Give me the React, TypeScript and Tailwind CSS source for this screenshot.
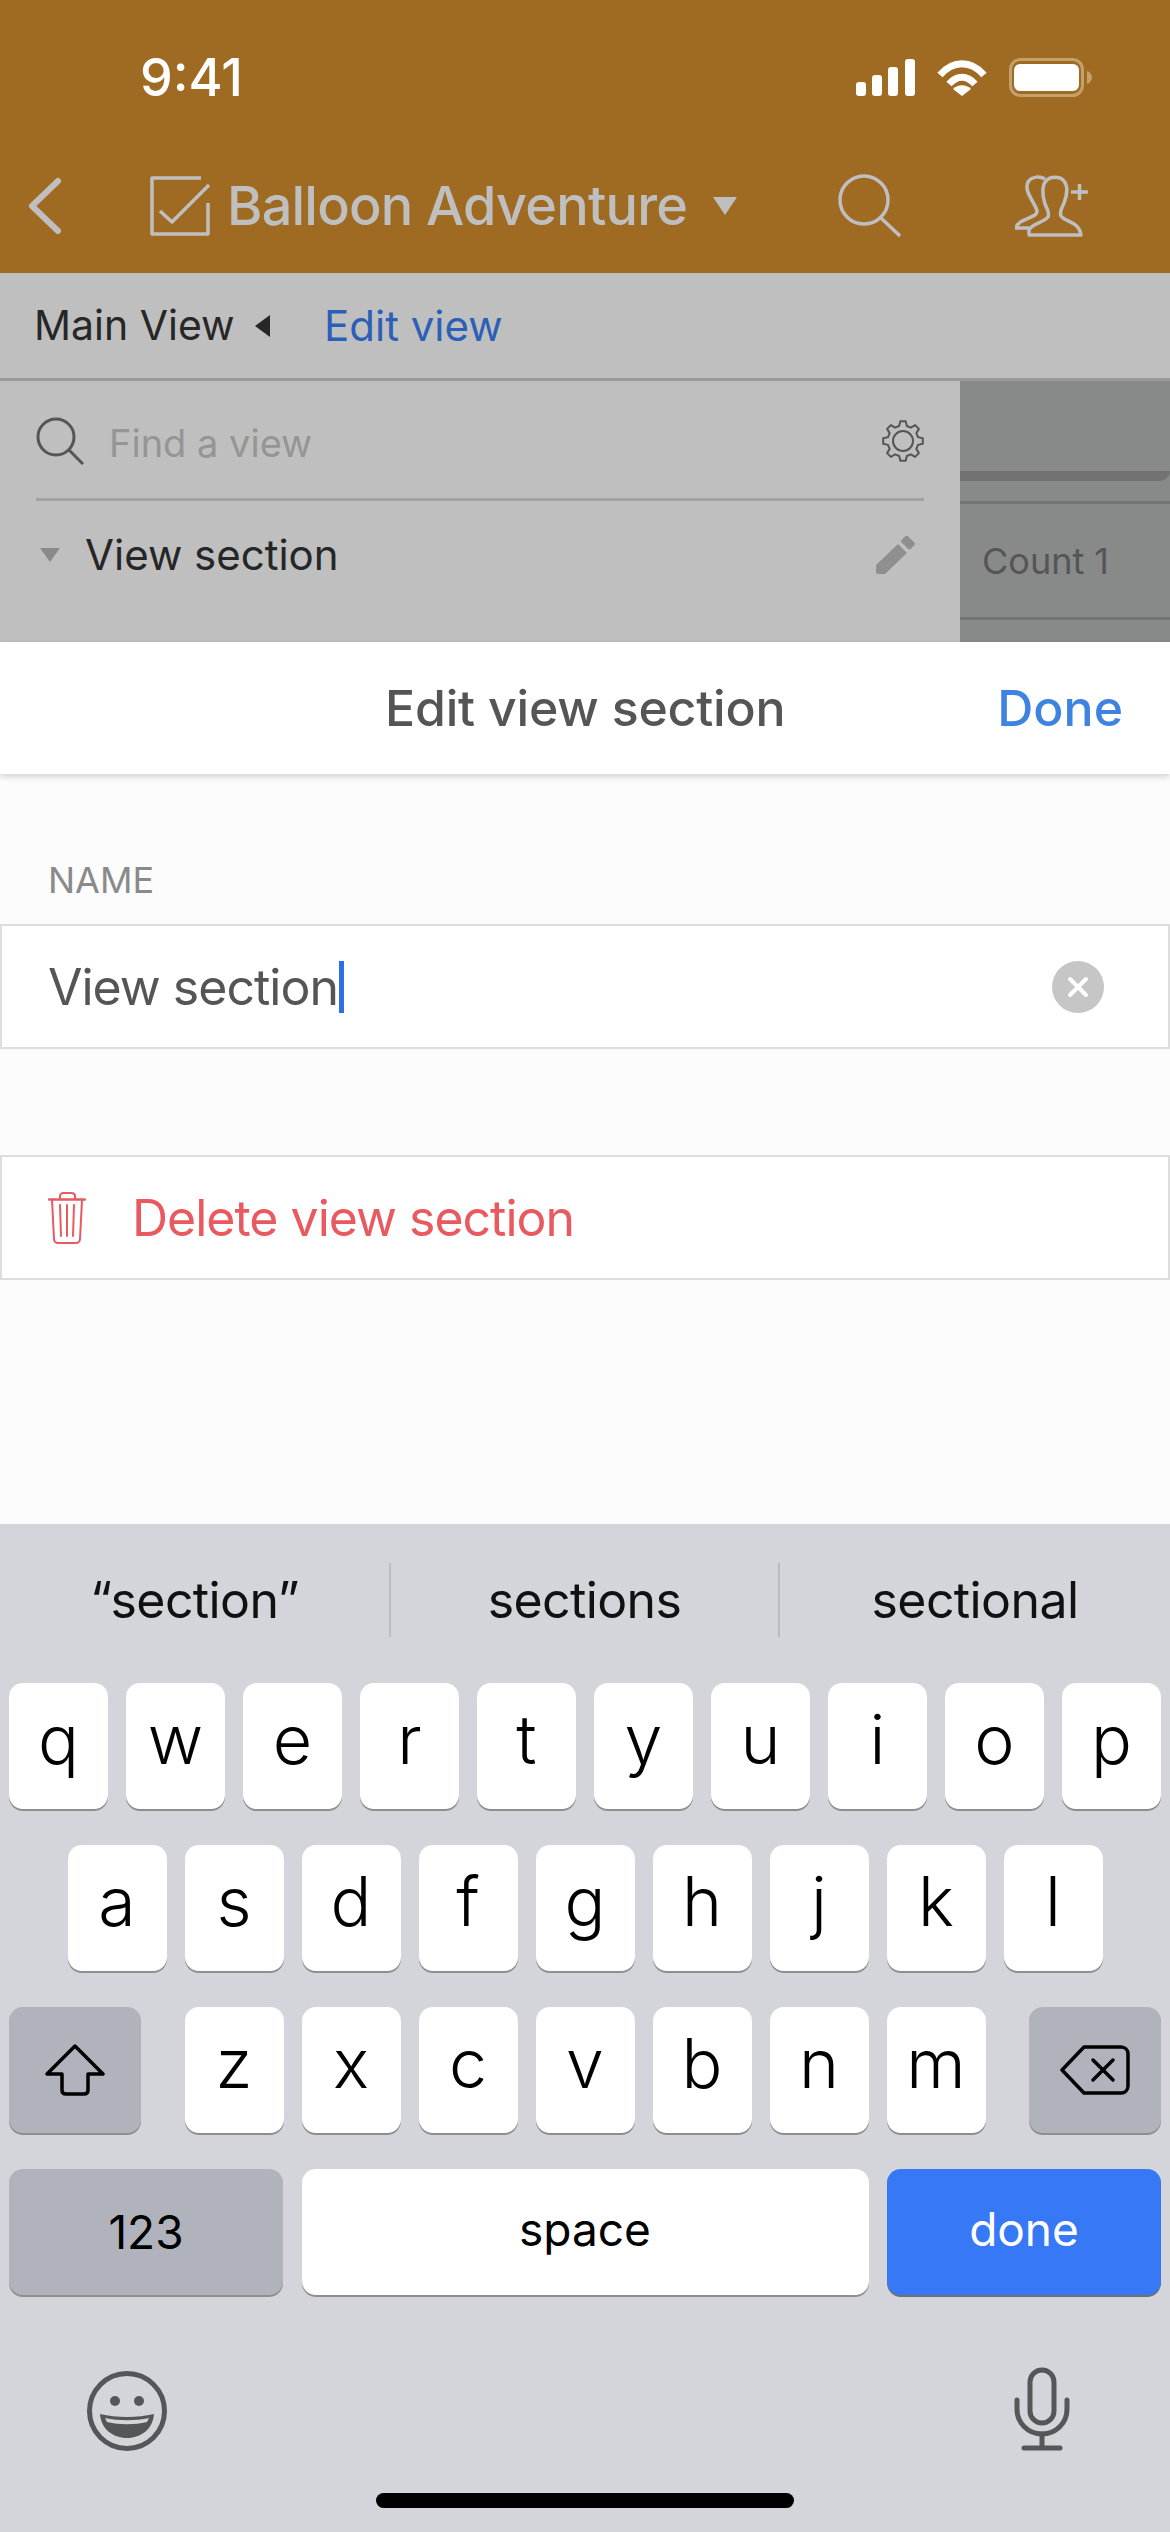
const rowOne = ["q", "w", "e", "r", "t", "y", "u", "i", "o", "p"];
const rowTwo = ["a", "s", "d", "f", "g", "h", "j", "k", "l"];
const rowThree = ["z", "x", "c", "v", "b", "n", "m"];

function gearPath() {
  const pts: string[] = [];
  const teeth = 8;
  for (let i = 0; i < teeth; i++) {
    const a = (i / teeth) * Math.PI * 2;
    const step = (Math.PI * 2) / teeth;
    const corners: [number, number][] = [
      [15.5, a - step * 0.32],
      [20, a - step * 0.17],
      [20, a + step * 0.17],
      [15.5, a + step * 0.32],
    ];
    for (const [r, t] of corners) {
      pts.push(`${(22 + r * Math.sin(t)).toFixed(2)} ${(22 - r * Math.cos(t)).toFixed(2)}`);
    }
  }
  return `M${pts.join(" L")} Z`;
}

function LetterKey({ label }: { label: string }) {
  return (
    <div className="w-[99px] h-[126px] bg-white rounded-[14px] shadow-[0_2px_0_#8e8e8e] flex items-center justify-center text-[68px] font-light leading-none text-black pb-[14px]">
      {label}
    </div>
  );
}

function StatusIcons() {
  return (
    <div className="flex items-start gap-[22px] h-[39px]">
      <svg width="59" height="37" viewBox="0 0 59 37" fill="#fff">
        <rect x="0" y="23" width="10" height="14" rx="3" />
        <rect x="16" y="16" width="10" height="21" rx="3" />
        <rect x="32" y="8" width="10" height="29" rx="3" />
        <rect x="49" y="0" width="10" height="37" rx="3" />
      </svg>
      <svg width="50" height="37" viewBox="0 0 50 37" fill="none" stroke="#fff" strokeWidth="7">
        <path d="M3 16 C16 1 34 1 47 16" />
        <path d="M12 25 C20 16 30 16 38 25" />
        <path d="M25 37 L16 30 C21 25 29 25 34 30 Z" fill="#fff" stroke="none" />
      </svg>
      <svg width="83" height="39" viewBox="0 0 83 39" fill="none" className="mt-[-1px]">
        <rect x="1.5" y="1.5" width="72" height="36" rx="10" stroke="#c4a06b" strokeWidth="3" />
        <rect x="5" y="6" width="65" height="27" rx="6" fill="#fff" />
        <path d="M78 13 C81 14 83 17 83 19.5 C83 22 81 25 78 26 Z" fill="#c4a06b" />
      </svg>
    </div>
  );
}

function PeopleIcon() {
  return (
    <svg width="73" height="62" viewBox="0 0 73 62" fill="none" stroke="#bfbfbf" strokeWidth="3.5" strokeLinejoin="round">
      <path d="M14 60 V55 C16 49 28 48 33 42 C35 38 32 34 30 29 C27 20 27 10 31 6 C35 1 45 1 49 6 C53 11 52 20 49 28 C47 33 44 37 46 41 C50 47 64 46 66 60 Z" />
      <path d="M14 53 H1 C3 45 14 44 20 40 C24 37 21 33 19 29 C14 20 10 14 13 7 C17 1 25 1 30 4" />
      <path d="M56 17 H73 M64.5 9 V25" />
    </svg>
  );
}

export default function App() {
  return (
    <div className="w-[1170px] h-[2532px] overflow-hidden flex flex-col bg-[#fcfcfc] font-['Inter',sans-serif]">
      <div className="h-[273px] shrink-0 bg-[#9f6b23]">
        <div className="h-[166px] flex justify-between pl-[140px] pr-[78px] pt-[59px]">
          <span className="text-[52px] leading-[38px] font-medium text-white">9:41</span>
          <StatusIcons />
        </div>
        <div className="flex items-center h-[80px] pl-[28px]">
          <svg width="34" height="58" viewBox="0 0 34 58" fill="none" stroke="#bfbfbf" strokeWidth="6" strokeLinecap="round" strokeLinejoin="round">
            <path d="M30 4 L4 29 L30 54" />
          </svg>
          <svg className="ml-[88px]" width="60" height="60" viewBox="0 0 60 60" fill="none" stroke="#bfbfbf" strokeWidth="3.5" strokeLinejoin="round">
            <path d="M51 2 H2 V58 H58 V27" />
            <path d="M10 35 L22 46 L59 9" />
          </svg>
          <span className="ml-[17px] w-[458px] whitespace-nowrap text-[54px] leading-none font-medium tracking-[-0.8px] text-[#bfbfbf]">Balloon Adventure</span>
          <svg className="ml-[28px]" width="24" height="18" viewBox="0 0 24 18" fill="#bfbfbf">
            <path d="M0 0 H24 L12 18 Z" />
          </svg>
          <svg className="ml-[101px]" width="64" height="64" viewBox="0 0 64 64" fill="none" stroke="#bfbfbf" strokeWidth="3.5">
            <circle cx="26" cy="26" r="24" />
            <path d="M43 44 L62 62" />
          </svg>
          <div className="ml-[113px]">
            <PeopleIcon />
          </div>
        </div>
      </div>

      <div className="h-[108px] shrink-0 bg-[#bfbfbf] border-b-[3px] border-[#999999] flex items-center pl-[34px]">
        <span className="text-[41px] leading-none w-[202px] whitespace-nowrap text-[#272727]">Main View</span>
        <svg className="ml-[19px]" width="15" height="22" viewBox="0 0 15 22" fill="#272727">
          <path d="M15 0 V22 L0 11 Z" />
        </svg>
        <span className="ml-[54px] text-[42px] leading-none text-[#2b5fb8]">Edit view</span>
      </div>

      <div className="h-[261px] shrink-0 flex">
        <div className="w-[960px] bg-[#bfbfbf] px-[36px]">
          <div className="h-[120px] flex items-center border-b-[3px] border-[#a3a3a3]">
            <svg width="48" height="48" viewBox="0 0 48 48" fill="none" stroke="#555" strokeWidth="3" className="mt-[2px]">
              <circle cx="20" cy="20" r="18" />
              <path d="M33 33 L47 47" />
            </svg>
            <span className="ml-[25px] mt-[6px] text-[38px] leading-none text-[#959595]">Find a view</span>
            <svg className="ml-auto mr-[-1px] mt-[3px]" width="44" height="44" viewBox="0 0 44 44" fill="none" stroke="#555" strokeWidth="2" strokeLinejoin="round">
              <path d={gearPath()} />
              <circle cx="22" cy="22" r="10" />
            </svg>
          </div>
          <div className="flex items-center h-[108px] pl-[4px]">
            <svg width="20" height="14" viewBox="0 0 20 14" fill="#8a8a8a">
              <path d="M0 0 H20 L10 14 Z" />
            </svg>
            <span className="ml-[25px] text-[42px] leading-none text-[#262626]">View section</span>
            <svg className="ml-auto mr-[9px]" width="39" height="38" viewBox="0 0 39 38" fill="#8f8f8f">
              <path d="M0 29 L22 8 L31 17 L9 38 H2 C1 38 0 37 0 36 Z" />
              <rect x="25.5" y="2" width="13" height="9" rx="2" transform="rotate(45 32 6.5)" />
            </svg>
          </div>
        </div>
        <div className="flex-1 bg-[#888a89]">
          <div className="h-[100px] border-b-[10px] border-[#727272] rounded-br-[10px]" />
          <div className="h-[23px] border-b-[3px] border-[#747474]" />
          <div className="h-[116px] border-b-[3px] border-[#747474] flex items-center pl-[22px] text-[36px] leading-none text-[#555555]">
            Count 1
          </div>
        </div>
      </div>

      <div className="h-[132px] shrink-0 bg-white shadow-[0_3px_6px_rgba(0,0,0,0.16)] z-10 flex items-center pr-[47px] relative">
        <span className="ml-[385px] text-[50px] leading-none font-medium tracking-[-0.2px] text-[#555555]">Edit view section</span>
        <span className="ml-auto text-[50px] leading-none font-medium text-[#3f83e0]">Done</span>
      </div>

      <div className="flex-1 flex flex-col">
        <div className="h-[150px] shrink-0 flex items-end pl-[48px] pb-[26px] text-[36px] leading-none text-[#8a8a8a]">NAME</div>
        <div className="h-[125px] shrink-0 bg-white border-2 border-[#dddddd] flex items-center pl-[46px] pr-[64px]">
          <span className="text-[50px] leading-none tracking-[-1px] text-[#555555]">View section</span>
          <span className="w-[5px] h-[52px] bg-[#2f6fe5] ml-[1px]" />
          <svg className="ml-auto" width="52" height="52" viewBox="0 0 52 52">
            <circle cx="26" cy="26" r="26" fill="#c6c6c6" />
            <path d="M18 18 L34 34 M34 18 L18 34" stroke="#fff" strokeWidth="4" strokeLinecap="round" />
          </svg>
        </div>
        <div className="h-[125px] shrink-0 mt-[106px] bg-white border-2 border-[#dddddd] flex items-center pl-[46px]">
          <svg width="38" height="52" viewBox="0 0 38 52" fill="none" stroke="#e85a5f" strokeWidth="2" strokeLinecap="round">
            <path d="M1 7.5 H37" strokeWidth="2.5" />
            <path d="M12 7 V4 C12 2 14 1 15 1 H23 C25 1 27 2 27 4 V7" />
            <path d="M4 8 L6 47 C6 49.5 8 51 10 51 H28 C30 51 32 49.5 32 47 L34 8" />
            <path d="M12 13 L13 44 M19 13 V44 M26 13 L25 44" />
          </svg>
          <span className="ml-[46px] text-[50px] leading-none tracking-[-1px] text-[#e85a5f]">Delete view section</span>
        </div>
      </div>

      <div className="h-[1008px] shrink-0 bg-[#d4d5da] flex flex-col">
        <div className="h-[159px] shrink-0 flex items-center pb-[7px] text-[50px] leading-none tracking-[-0.6px] text-[#111111]">
          <div className="w-[389px] text-center">“section”</div>
          <div className="w-[2px] h-[74px] bg-[#bbbcc0]" />
          <div className="flex-1 text-center">sections</div>
          <div className="w-[2px] h-[74px] bg-[#bbbcc0]" />
          <div className="w-[390px] text-center">sectional</div>
        </div>

        <div className="flex flex-col gap-[36px] px-[9px]">
          <div className="flex justify-between">
            {rowOne.map((k) => (
              <LetterKey key={k} label={k} />
            ))}
          </div>
          <div className="flex justify-center gap-[18px]">
            {rowTwo.map((k) => (
              <LetterKey key={k} label={k} />
            ))}
          </div>
          <div className="flex justify-between">
            <div className="w-[132px] h-[126px] bg-[#b0b3bc] rounded-[14px] shadow-[0_2px_0_#8e8e8e] flex items-center justify-center">
              <svg width="60" height="52" viewBox="0 0 60 52" fill="none" stroke="#000" strokeWidth="3.5" strokeLinejoin="round">
                <path d="M30 2 L58 30 H43 V46 C43 48 42 50 39 50 H21 C18 50 17 48 17 46 V30 H2 Z" />
              </svg>
            </div>
            <div className="flex gap-[18px]">
              {rowThree.map((k) => (
                <LetterKey key={k} label={k} />
              ))}
            </div>
            <div className="w-[132px] h-[126px] bg-[#b0b3bc] rounded-[14px] shadow-[0_2px_0_#8e8e8e] flex items-center justify-center">
              <svg width="70" height="50" viewBox="0 0 70 50" fill="none" stroke="#000" strokeWidth="3.5" strokeLinejoin="round" strokeLinecap="round">
                <path d="M24 2 H61 C65 2 68 5 68 9 V41 C68 45 65 48 61 48 H24 L2 25 Z" />
                <path d="M33 15 L53 35 M53 15 L33 35" />
              </svg>
            </div>
          </div>
          <div className="flex justify-between">
            <div className="w-[274px] h-[126px] bg-[#b0b3bc] rounded-[14px] shadow-[0_2px_0_#8e8e8e] flex items-center justify-center text-[46px] leading-none text-black">
              123
            </div>
            <div className="w-[567px] h-[126px] bg-white rounded-[14px] shadow-[0_2px_0_#8e8e8e] flex items-center justify-center text-[46px] leading-none text-black pb-[7px]">
              space
            </div>
            <div className="w-[274px] h-[126px] bg-[#3678f5] rounded-[14px] shadow-[0_2px_0_#6f6f6f] flex items-center justify-center text-[46px] leading-none text-white pb-[7px]">
              done
            </div>
          </div>
        </div>

        <div className="flex justify-between pl-[87px] pr-[100px] pt-[72px]">
          <svg width="80" height="80" viewBox="0 0 80 80" className="mt-[4px]">
            <circle cx="40" cy="40" r="37.5" fill="none" stroke="#555658" strokeWidth="5" />
            <circle cx="28" cy="30" r="5" fill="#555658" />
            <circle cx="52" cy="30" r="5" fill="#555658" />
            <path d="M13 43 C30 47 50 47 67 43 C66 58 54 67 40 67 C26 67 14 58 13 43 Z" fill="#555658" />
            <path d="M18 47 C32 50 48 50 62 47 L60 51 C47 54 33 54 20 51 Z" fill="#d4d5da" />
          </svg>
          <svg width="56" height="84" viewBox="0 0 56 84" fill="none" stroke="#555658" strokeWidth="5" strokeLinecap="round">
            <rect x="16" y="3" width="24" height="53" rx="12" />
            <path d="M3 33 V42 C3 56 14 67 28 67 C42 67 53 56 53 42 V33" />
            <path d="M28 67 V81 M10 81 H46" />
          </svg>
        </div>

        <div className="flex justify-center mt-auto pb-[24px]">
          <div className="w-[418px] h-[15px] rounded-full bg-black" />
        </div>
      </div>
    </div>
  );
}
